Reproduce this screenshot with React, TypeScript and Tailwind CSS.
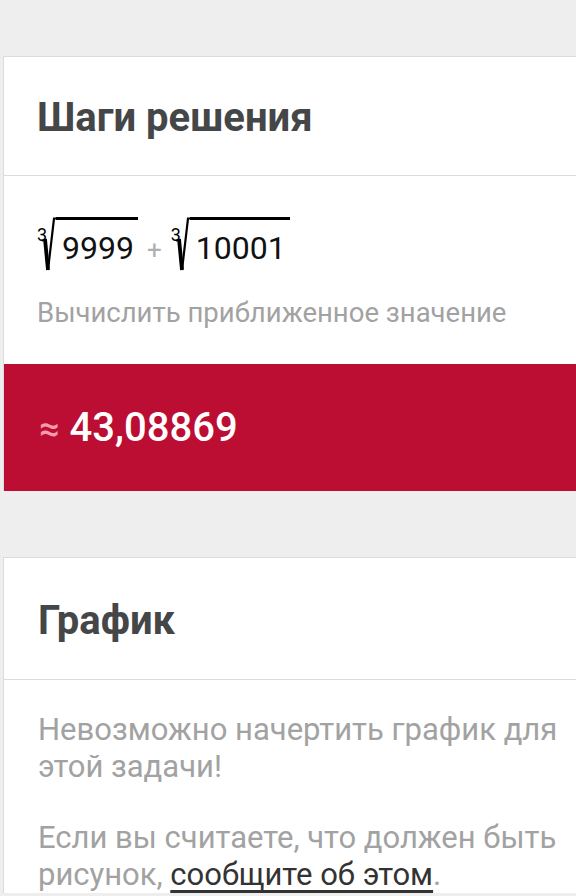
import type { ReactNode } from 'react';

// cube root with a drawn radical sign; the radicand carries the bar
function CubeRoot({ children }: { children: ReactNode }) {
  return (
    <span className="relative inline-flex items-stretch">
      <span className="absolute left-0 top-[9px] text-[18px] leading-none text-black">3</span>
      <svg width="16" height="56" viewBox="0 0 16 56" className="ml-[3px] shrink-0">
        <path d="M2 24 L5 22" stroke="#000" strokeWidth="2" fill="none" />
        <path d="M5 22 L8 53" stroke="#000" strokeWidth="3.8" fill="none" />
        <path d="M8 53 L14 1.5 L16 1.5" stroke="#000" strokeWidth="2.2" fill="none" />
      </svg>
      <span className="border-t-[3px] border-black pl-[6px] pr-[4px] pt-[9px] text-[32px] leading-[38px] text-[#111]">
        {children}
      </span>
    </span>
  );
}

function CardTitle({ children, tall }: { children: ReactNode; tall?: boolean }) {
  return (
    <div
      className={
        tall
          ? 'flex h-[122px] items-center border-b border-[#dcdcdc] px-[34px]'
          : 'flex h-[119px] items-center border-b border-[#dcdcdc] px-[33px]'
      }
    >
      <h2 className="mt-[4px] text-[40px] font-bold leading-none text-[#444648]">{children}</h2>
    </div>
  );
}

export default function App() {
  return (
    <div className="h-[896px] w-[576px] overflow-hidden bg-[#eeeeee] pt-[56px] font-['Roboto','Noto_Sans',sans-serif]">
      <section className="ml-[3px] w-[640px] border border-b-0 border-[#dcdcdc] bg-white">
        <CardTitle>Шаги решения</CardTitle>

        <div className="px-[33px] pb-[33px] pt-[41px]">
          <div className="flex items-center gap-[9px]">
            <CubeRoot>9999</CubeRoot>
            <span className="mt-[10px] text-[26px] leading-none text-[#b0b0b0]">+</span>
            <CubeRoot>10001</CubeRoot>
          </div>
          <p className="mt-[22px] text-[27.5px] leading-[36px] text-[#a2a2a2]">
            Вычислить приближенное значение
          </p>
        </div>

        <div className="flex h-[127px] items-center gap-[10px] bg-[#bc0d32] px-[35px]">
          <span className="mt-[2px] text-[36px] font-medium leading-none text-[#f59bab]">≈</span>
          <span className="text-[40px] font-medium leading-none text-white">43,08869</span>
        </div>
      </section>

      <section className="ml-[3px] mt-[66px] w-[640px] border border-b-0 border-[#dcdcdc] bg-white">
        <CardTitle tall>График</CardTitle>

        <div className="whitespace-nowrap px-[34px] pt-[31px] text-[31px] leading-[37px] text-[#a2a2a2]">
          <p>
            Невозможно начертить график для
            <br />
            этой задачи!
          </p>
          <p className="mt-[34px]">
            Если вы считаете, что должен быть
            <br />
            рисунок, <a href="#" className="text-[#333333] underline underline-offset-[5px]">сообщите об этом</a>.
          </p>
        </div>
      </section>
    </div>
  );
}
